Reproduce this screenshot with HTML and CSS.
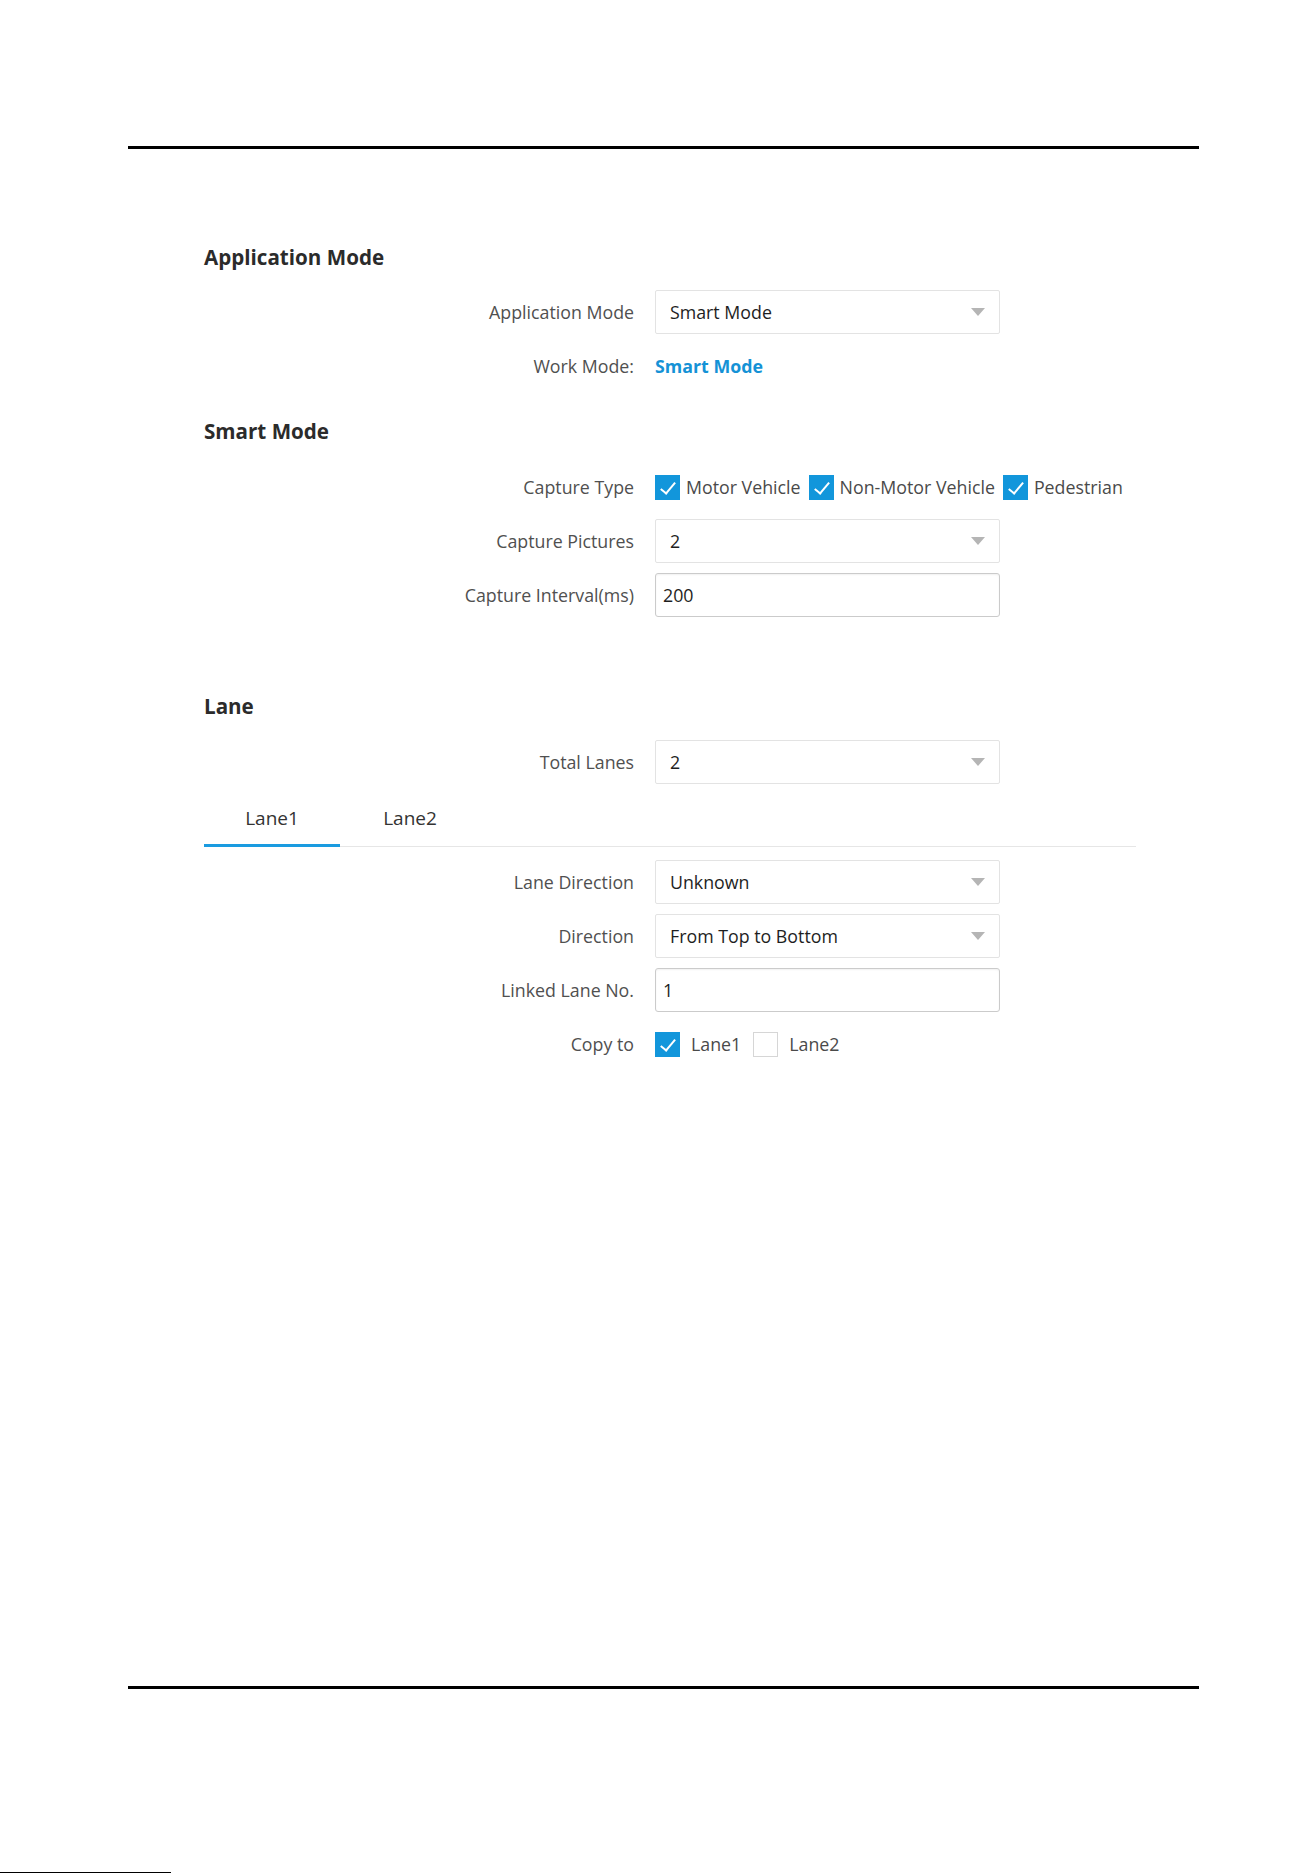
FILE: index.html
```html
<!DOCTYPE html>
<html lang="en">
<head>
    <meta charset="UTF-8">
    <meta name="viewport" content="width=device-width, initial-scale=1.0">
    <title>Smart Mode Settings</title>
    <link rel="stylesheet" href="styles.css">
</head>
<body>
    <div class="page">
        <div class="rule"></div>

        <div class="content">
            <!-- Application mode -->
            <h3 class="section-title">Application Mode</h3>
            <div class="form-row">
                <label class="form-label">Application Mode</label>
                <div class="select"><span>Smart Mode</span><i class="caret"></i></div>
            </div>
            <div class="form-row">
                <label class="form-label">Work Mode:</label>
                <div class="value-link">Smart Mode</div>
            </div>

            <!-- Smart mode -->
            <h3 class="section-title smart">Smart Mode</h3>
            <div class="form-row">
                <label class="form-label">Capture Type</label>
                <div class="check-group">
                    <span class="check-item"><i class="checkbox checked"></i>Motor Vehicle</span>
                    <span class="check-item"><i class="checkbox checked"></i>Non-Motor Vehicle</span>
                    <span class="check-item"><i class="checkbox checked"></i>Pedestrian</span>
                </div>
            </div>
            <div class="form-row">
                <label class="form-label">Capture Pictures</label>
                <div class="select"><span>2</span><i class="caret"></i></div>
            </div>
            <div class="form-row">
                <label class="form-label">Capture Interval(ms)</label>
                <div class="input">200</div>
            </div>

            <!-- Lane -->
            <h3 class="section-title lane">Lane</h3>
            <div class="form-row">
                <label class="form-label">Total Lanes</label>
                <div class="select"><span>2</span><i class="caret"></i></div>
            </div>

            <div class="tabs">
                <div class="tab active">Lane1</div>
                <div class="tab">Lane2</div>
            </div>

            <div class="form-row">
                <label class="form-label">Lane Direction</label>
                <div class="select"><span>Unknown</span><i class="caret"></i></div>
            </div>
            <div class="form-row">
                <label class="form-label">Direction</label>
                <div class="select"><span>From Top to Bottom</span><i class="caret"></i></div>
            </div>
            <div class="form-row">
                <label class="form-label">Linked Lane No.</label>
                <div class="input">1</div>
            </div>
            <div class="form-row">
                <label class="form-label">Copy to</label>
                <div class="check-group copy">
                    <span class="check-item"><i class="checkbox checked"></i>Lane1</span>
                    <span class="check-item"><i class="checkbox"></i>Lane2</span>
                </div>
            </div>
        </div>

        <div class="rule"></div>
        <div class="scanline"></div>
    </div>
</body>
</html>
```

FILE: styles.css
```css
body {
    margin: 0;
    padding: 0;
    background-color: #fff;
    font-family: "Open Sans", Arial, sans-serif;
    font-size: 17.8px;
    color: #333;
}
.page {
    display: flex;
    flex-direction: column;
    height: 1873px;
    padding-top: 146px;
    box-sizing: border-box;
}
.rule {
    width: 1071px;
    height: 3px;
    margin-left: 128px;
    background-color: #000;
}
.content {
    height: 1537px;
    box-sizing: border-box;
    padding: 94px 0 0 204px;
}
.section-title {
    margin: 0 0 19px;
    font-size: 20.6px;
    font-weight: 700;
    line-height: 28px;
    color: #2b2b2b;
}
.section-title.smart {
    margin-top: 29px;
    margin-bottom: 20px;
}
.section-title.lane {
    margin-top: 75px;
    margin-bottom: 20px;
}
.form-row {
    display: grid;
    grid-template-columns: 430px 345px;
    column-gap: 21px;
    align-items: center;
    height: 44px;
    margin-bottom: 10px;
}
.form-label {
    text-align: right;
    color: #505050;
    white-space: nowrap;
}
.select,
.input {
    height: 44px;
    box-sizing: border-box;
    display: flex;
    align-items: center;
    white-space: nowrap;
    color: #1e1e1e;
}
.select {
    justify-content: space-between;
    padding: 0 14px 0 14px;
    border: 1px solid #e3e3e3;
    border-radius: 2px;
}
.caret {
    width: 0;
    height: 0;
    border-left: 7px solid transparent;
    border-right: 7px solid transparent;
    border-top: 8px solid #b5b5b5;
}
.input {
    padding-left: 7px;
    border: 1px solid #cbcbcb;
    border-radius: 3px;
    box-shadow: inset 0 1px 2px rgba(0, 0, 0, 0.06);
}
.value-link {
    color: #1592d6;
    font-weight: 700;
}
.check-group {
    display: flex;
    align-items: center;
    gap: 8px;
    white-space: nowrap;
    color: #4a4a4a;
}
.check-item {
    display: flex;
    align-items: center;
    gap: 6px;
}
.check-group.copy {
    gap: 12px;
}
.check-group.copy .check-item {
    gap: 11px;
}
.checkbox {
    position: relative;
    width: 25px;
    height: 25px;
    box-sizing: border-box;
    border: 1px solid #d6d6d6;
    background-color: #fff;
}
.checkbox.checked {
    border-color: #1296db;
    background-color: #1296db;
}
/* white tick drawn from two borders */
.checkbox.checked::after {
    content: "";
    position: absolute;
    left: 8px;
    top: 3px;
    width: 6px;
    height: 13px;
    border-right: 2px solid #fff;
    border-bottom: 2px solid #fff;
    transform: rotate(40deg);
}
.tabs {
    display: flex;
    width: 932px;
    border-bottom: 1px solid #e6e6e6;
    margin-bottom: 13px;
}
.tab {
    width: 136px;
    padding: 12px 0 14px;
    line-height: 24px;
    text-align: center;
    font-size: 19px;
    color: #333;
    border-bottom: 3px solid transparent;
    margin-bottom: -1px;
}
.tab + .tab {
    width: 140px;
}
.tab.active {
    border-bottom-color: #1a9be0;
}
.scanline {
    margin-top: auto;
    width: 171px;
    height: 1px;
    background-color: #000;
}
```
